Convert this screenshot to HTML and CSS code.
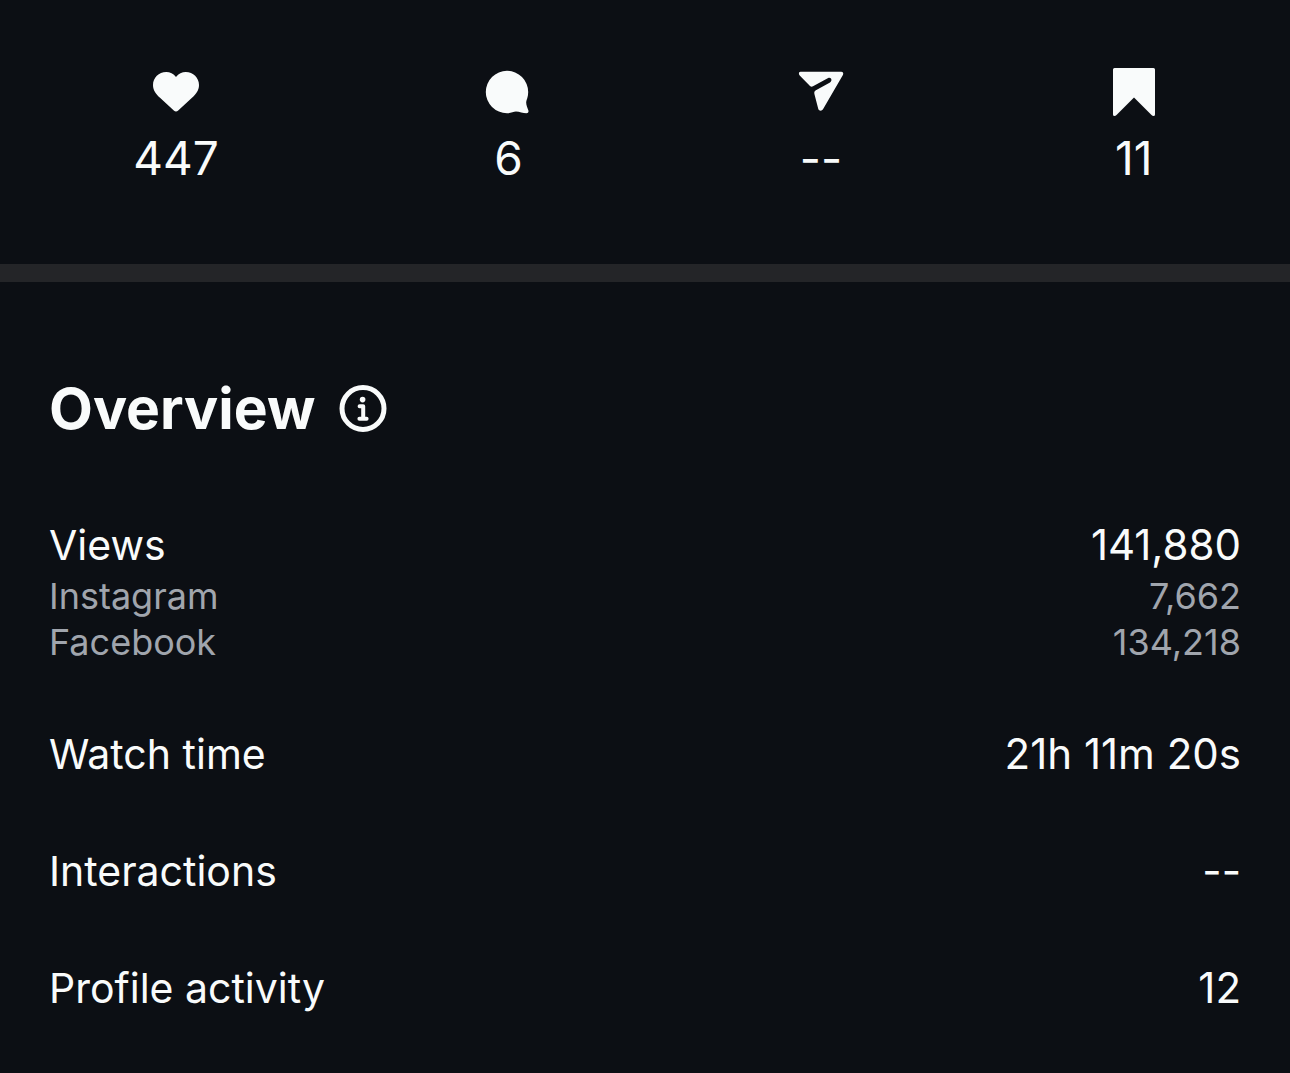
FILE: index.html
```html
<!DOCTYPE html>
<html lang="en">
<head>
    <meta charset="UTF-8">
    <meta name="viewport" content="width=device-width, initial-scale=1.0">
    <title>Insights</title>

    <link rel="stylesheet" href="styles.css">
</head>
<body>
    <main>
        <ul class="stats">
            <li class="stat">
                <svg class="stat-icon" viewBox="0 0 46 48" role="img" aria-label="Likes">
                    <path d="M23 9C20.5 5.8 17 4 13.2 4C5.8 4 0 9.8 0 17C0 22.5 3 26.2 7 29.8L20.8 42.6Q23 44.6 25.2 42.6L39 29.8C43 26.2 46 22.5 46 17C46 9.8 40.2 4 32.8 4C29 4 25.5 5.8 23 9Z"/>
                </svg>
                <span class="stat-value">447</span>
            </li>
            <li class="stat">
                <svg class="stat-icon" viewBox="0 0 46 48" role="img" aria-label="Comments">
                    <path d="M22 2.8A21.2 21.2 0 1 0 22 45.2C26 45.2 28.5 43.6 31 43.6C34.5 43.8 38 45.2 41.5 45.2Q44 45 43.4 42.6C42.4 39.5 41 37 41.2 34C41.4 32 43.2 29 43.2 24A21.2 21.2 0 0 0 22 2.8Z"/>
                </svg>
                <span class="stat-value">6</span>
            </li>
            <li class="stat">
                <svg class="stat-icon" viewBox="0 0 46 48" role="img" aria-label="Shares">
                    <path d="M2.6 3.8H43.2C45 3.8 45.8 5.6 44.9 7L25 41.3C23.9 43.3 21 43.1 20.3 41L16.4 26C16.1 24.2 16.4 23.2 17.9 22.3L32 14.4C34.8 12.6 33.2 8.8 30.2 10L15 18.3C14 18.9 13 18.9 12 18.1L1.7 7.5C0.3 6 0.8 3.8 2.6 3.8Z"/>
                </svg>
                <span class="stat-value">--</span>
            </li>
            <li class="stat">
                <svg class="stat-icon" viewBox="0 0 46 48" role="img" aria-label="Saves">
                    <path d="M3.5 0H42.5Q44 0 44 1.5V46.5Q44 48 42.5 48Q41.5 48 40.5 47L23 29.6L5.5 47Q4.5 48 3.5 48Q2 48 2 46.5V1.5Q2 0 3.5 0Z"/>
                </svg>
                <span class="stat-value">11</span>
            </li>
        </ul>

        <section class="overview">
            <header class="overview-header">
                <h1>Overview</h1>
                <button type="button" class="info-btn" aria-label="About these numbers">
                    <svg viewBox="0 0 48 48" aria-hidden="true">
                        <circle class="ring" cx="24" cy="23.5" r="21"/>
                        <circle cx="23.6" cy="14.6" r="2.8"/>
                        <path class="stem" d="M20.6 21.2H24.2V33.6M20.4 33.8H27.6"/>
                    </svg>
                </button>
            </header>

            <dl class="metrics">
                <div class="metric-group">
                    <div class="metric">
                        <dt>Views</dt>
                        <dd>141,880</dd>
                    </div>
                    <div class="metric metric-sub">
                        <dt>Instagram</dt>
                        <dd>7,662</dd>
                    </div>
                    <div class="metric metric-sub">
                        <dt>Facebook</dt>
                        <dd>134,218</dd>
                    </div>
                </div>
                <div class="metric">
                    <dt>Watch time</dt>
                    <dd>21h 11m 20s</dd>
                </div>
                <div class="metric">
                    <dt>Interactions</dt>
                    <dd>--</dd>
                </div>
                <div class="metric">
                    <dt>Profile activity</dt>
                    <dd>12</dd>
                </div>
            </dl>
        </section>
    </main>
</body>
</html>
```
FILE: styles.css
```css
* {
    margin: 0;
    padding: 0;
    box-sizing: border-box;
}

body {
    font-family: Inter, Roboto, 'Liberation Sans', sans-serif;
    background: #0c0f14;
    color: #f9fbfb;
}

.stats {
    display: flex;
    justify-content: space-around;
    padding: 68px 0 78px;
    border-bottom: 18px solid #242528;
    list-style: none;
}

.stat {
    display: flex;
    flex-direction: column;
    align-items: center;
    gap: 14px;
}

.stat-icon {
    width: 46px;
    height: 48px;
    fill: currentColor;
}

.stat-value {
    font-size: 46px;
    line-height: 56px;
}

.overview {
    padding: 91px 49px 56px;
}

.overview-header {
    display: flex;
    align-items: center;
    gap: 24px;
    margin-bottom: 72px;
}

.overview-header h1 {
    font-size: 57px;
    font-weight: 700;
    line-height: 72px;
}

.info-btn {
    width: 48px;
    height: 48px;
    background: none;
    border: none;
    color: inherit;
    cursor: pointer;
}

.info-btn svg {
    display: block;
    fill: currentColor;
}

.info-btn .ring,
.info-btn .stem {
    fill: none;
    stroke: currentColor;
    stroke-width: 4;
    stroke-linecap: round;
    stroke-linejoin: round;
}

.info-btn .ring {
    stroke-width: 5;
}

.metrics {
    display: flex;
    flex-direction: column;
    gap: 61px;
}

.metric {
    display: flex;
    justify-content: space-between;
    font-size: 42px;
    line-height: 56px;
}

.metric dt {
    font-size: 41px;
}

.metric-sub,
.metric-sub dt {
    font-size: 36px;
    line-height: 46px;
    color: #a0a5ad;
}
```
